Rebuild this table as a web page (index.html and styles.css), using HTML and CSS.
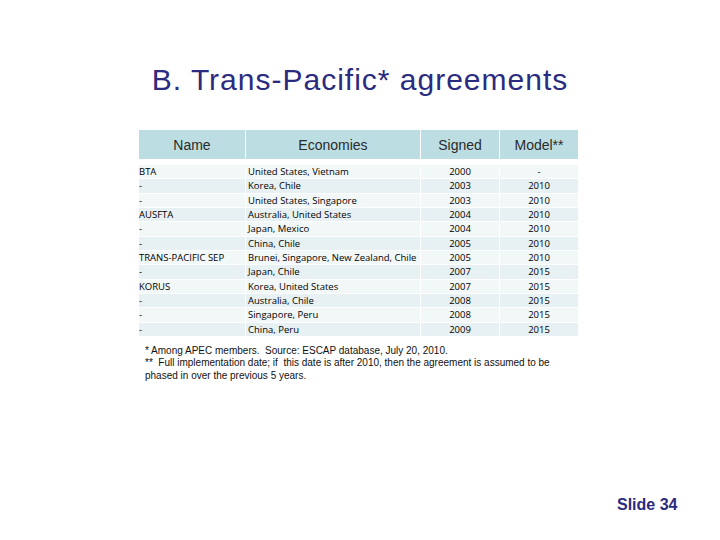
FILE: index.html
```html
<!DOCTYPE html>
<html>
<head>
<meta charset="utf-8">
<link rel="stylesheet" href="styles.css">
</head>
<body>
<div class="slide">
  <h1 class="title">B. Trans-Pacific* agreements</h1>
  <table class="agreements">
    <thead>
      <tr><th class="c-name">Name</th><th class="c-econ">Economies</th><th class="c-sig">Signed</th><th class="c-mod">Model**</th></tr>
    </thead>
    <tbody>
      <tr><td>BTA</td><td>United States, Vietnam</td><td class="num">2000</td><td class="num">-</td></tr>
      <tr><td>-</td><td>Korea, Chile</td><td class="num">2003</td><td class="num">2010</td></tr>
      <tr><td>-</td><td>United States, Singapore</td><td class="num">2003</td><td class="num">2010</td></tr>
      <tr><td>AUSFTA</td><td>Australia, United States</td><td class="num">2004</td><td class="num">2010</td></tr>
      <tr><td>-</td><td>Japan, Mexico</td><td class="num">2004</td><td class="num">2010</td></tr>
      <tr><td>-</td><td>China, Chile</td><td class="num">2005</td><td class="num">2010</td></tr>
      <tr><td>TRANS-PACIFIC SEP</td><td>Brunei, Singapore, New Zealand, Chile</td><td class="num">2005</td><td class="num">2010</td></tr>
      <tr><td>-</td><td>Japan, Chile</td><td class="num">2007</td><td class="num">2015</td></tr>
      <tr><td>KORUS</td><td>Korea, United States</td><td class="num">2007</td><td class="num">2015</td></tr>
      <tr><td>-</td><td>Australia, Chile</td><td class="num">2008</td><td class="num">2015</td></tr>
      <tr><td>-</td><td>Singapore, Peru</td><td class="num">2008</td><td class="num">2015</td></tr>
      <tr><td>-</td><td>China, Peru</td><td class="num">2009</td><td class="num">2015</td></tr>
    </tbody>
  </table>
  <div class="notes">
    <p>* Among APEC members.&nbsp; Source: ESCAP database, July 20, 2010.</p>
    <p>**&nbsp; Full implementation date; if&nbsp; this date is after 2010, then the agreement is assumed to be phased in over the previous 5 years.</p>
  </div>
  <div class="slide-num">Slide 34</div>
</div>
</body>
</html>
```
FILE: styles.css
```css
html, body { margin: 0; padding: 0; background: #ffffff; }
.slide {
  width: 720px;
  height: 540px;
  position: relative;
  font-family: "Liberation Sans", Arial, sans-serif;
  display: flex;
  flex-direction: column;
}
.title {
  margin: 62px 0 0 0;
  text-align: center;
  font-weight: normal;
  font-size: 30px;
  letter-spacing: 1px;
  line-height: 36px;
  color: #2b2b7f;
}
.agreements {
  margin: 32px 0 0 139px;
  width: 437px;
  border-collapse: collapse;
  table-layout: fixed;
  font-family: "Open Sans", "DejaVu Sans", sans-serif;
  font-size: 9.5px;
  color: #000;
}
.agreements th {
  background: #bcdee3;
  font-family: "Liberation Sans", Arial, sans-serif;
  font-weight: normal;
  font-size: 14px;
  height: 29px;
  padding: 0;
  color: #2a2a2a;
  border-left: 1px solid #ffffff;
  border-bottom: 6px solid #ffffff;
}
.agreements th:first-child { border-left: none; }
.c-name { width: 106px; }
.c-econ { width: 174px; }
.c-sig { width: 78px; }
.c-mod { width: 78px; }
.agreements td {
  height: 13.33px;
  line-height: 13px;
  padding: 0;
  border-left: 1px solid #ffffff;
  border-top: 1px solid #ffffff;
  white-space: nowrap;
}
.agreements td:first-child { border-left: none; }
.agreements td:nth-child(2) { padding-left: 2px; }
.agreements tbody tr:nth-child(odd) td { background: #f2f7f8; }
.agreements tbody tr:nth-child(even) td { background: #e7f1f3; }
.agreements td.num { text-align: center; }
.notes {
  margin: 9px 0 0 145px;
  width: 420px;
  font-size: 10px;
  line-height: 12.5px;
  color: #111;
}
.notes p { margin: 0; }
.slide-num {
  position: absolute;
  left: 617px;
  top: 496px;
  font-size: 16px;
  font-weight: bold;
  color: #2b2b7f;
}
```
